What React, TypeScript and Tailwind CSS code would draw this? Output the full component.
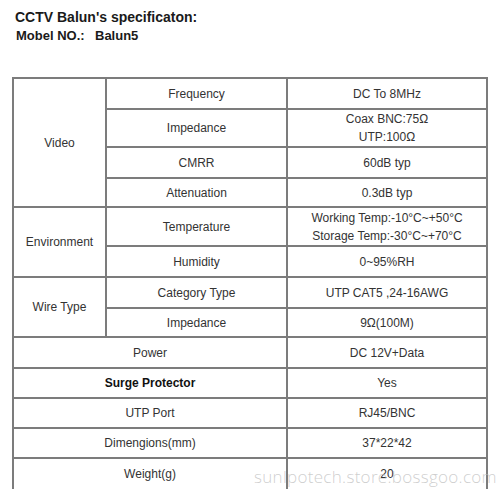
import React from "react";

type Row = {
  group?: { label: string; span: number };
  name: string;
  value: React.ReactNode;
  h: number;
  bold?: boolean;
  full?: boolean;
};

const rows: Row[] = [
  { group: { label: "Video", span: 4 }, name: "Frequency", value: "DC To 8MHz", h: 31 },
  {
    name: "Impedance",
    value: (
      <>
        <div>Coax BNC:75Ω</div>
        <div>UTP:100Ω</div>
      </>
    ),
    h: 38,
  },
  { name: "CMRR", value: "60dB typ", h: 31 },
  { name: "Attenuation", value: "0.3dB typ", h: 29 },
  {
    group: { label: "Environment", span: 2 },
    name: "Temperature",
    value: (
      <>
        <div>Working Temp:-10°C~+50°C</div>
        <div>Storage Temp:-30°C~+70°C</div>
      </>
    ),
    h: 39,
  },
  { name: "Humidity", value: "0~95%RH", h: 31 },
  { group: { label: "Wire Type", span: 2 }, name: "Category Type", value: "UTP CAT5 ,24-16AWG", h: 31 },
  { name: "Impedance", value: "9Ω(100M)", h: 29 },
  { name: "Power", value: "DC 12V+Data", h: 31, full: true },
  { name: "Surge Protector", value: "Yes", h: 30, full: true, bold: true },
  { name: "UTP Port", value: "RJ45/BNC", h: 30, full: true },
  { name: "Dimengions(mm)", value: "37*22*42", h: 30, full: true },
  { name: "Weight(g)", value: "20", h: 31, full: true },
];

export default function App() {
  const cell = "border-2 border-[#7c7c7c] text-center align-middle p-0";
  return (
    <div className="relative w-[500px] h-[500px] overflow-hidden bg-white text-[#333] font-['Liberation_Sans',Arial,sans-serif]">
      {/* Header */}
      <div className="pl-[15px] pt-[8px] font-bold text-[#1a1a1a]">
        <div className="text-[14px] leading-[18px]">CCTV Balun's specificaton:</div>
        <div className="flex text-[13px] leading-[20px] pl-[1px]">
          <span className="w-[79px]">Mobel NO.:</span>
          <span>Balun5</span>
        </div>
      </div>

      {/* Spec table */}
      <table className="ml-[12px] mt-[31px] w-[474px] table-fixed border-collapse text-[12px] leading-[18px]">
        <colgroup>
          <col className="w-[93px]" />
          <col className="w-[181px]" />
          <col className="w-[200px]" />
        </colgroup>
        <tbody>
          {rows.map((r, i) => {
            const last = i === rows.length - 1;
            const edge = last ? " border-b-0" : "";
            return (
              <tr key={i} style={{ height: r.h }}>
                {r.group && (
                  <td rowSpan={r.group.span} className={cell}>
                    {r.group.label}
                  </td>
                )}
                <td
                  colSpan={r.full ? 2 : 1}
                  className={cell + edge + (r.bold ? " font-bold text-[#111]" : "")}
                >
                  {r.name}
                </td>
                <td className={cell + edge}>{r.value}</td>
              </tr>
            );
          })}
        </tbody>
      </table>

      {/* Watermark */}
      <div className="absolute left-[254px] top-[467px] text-[17px] leading-[20px] tracking-[0.3px] font-['Open_Sans',sans-serif] font-light text-[#b9b9b9]/70">
        sunlpotech.store.bossgoo.com
      </div>
    </div>
  );
}
